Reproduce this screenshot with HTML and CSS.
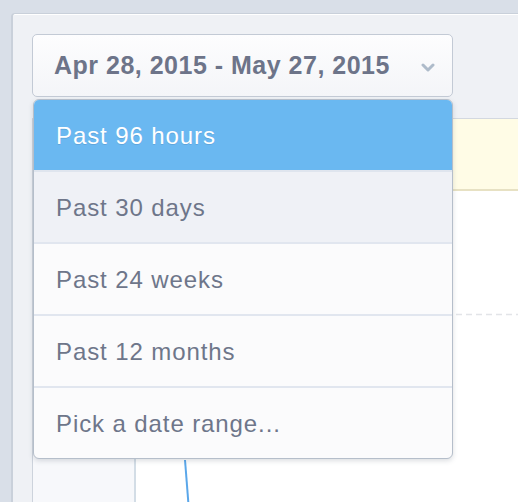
FILE: index.html
```html
<!DOCTYPE html>
<html>
<head>
<meta charset="utf-8">
<link rel="stylesheet" href="styles.css">
</head>
<body>
<div class="panel">
  <div class="picker-wrap">
    <button class="picker">
      <span class="picker-label">Apr 28, 2015 - May 27, 2015</span>
      <svg class="chevron" width="14" height="9" viewBox="0 0 14 9"><polyline points="2,2 7,7 12,2" fill="none" stroke="#aebbca" stroke-width="3" stroke-linejoin="round" stroke-linecap="round"/></svg>
    </button>
    <ul class="menu">
      <li class="item active">Past 96 hours</li>
      <li class="item hover">Past 30 days</li>
      <li class="item">Past 24 weeks</li>
      <li class="item">Past 12 months</li>
      <li class="item">Pick a date range...</li>
    </ul>
  </div>
  <div class="chart-box">
    <div class="notice"></div>
    <div class="chart-body">
      <div class="axis"></div>
      <div class="plot">
        <svg class="plot-svg" width="400" height="320" viewBox="0 0 400 320">
          <line x1="0" y1="123.5" x2="400" y2="123.5" stroke="#e2e4e8" stroke-width="1.5" stroke-dasharray="6 4"/>
          <line x1="49" y1="269" x2="53" y2="320" stroke="#5aa7ea" stroke-width="2"/>
        </svg>
      </div>
    </div>
  </div>
</div>
</body>
</html>
```
FILE: styles.css
```css
html, body {
  margin: 0;
  padding: 0;
  height: 100%;
  overflow: hidden;
}
body {
  background: #d9dfe8;
  font-family: "Liberation Sans", Arial, sans-serif;
}
.panel {
  margin: 13px 0 0 11px;
  height: 600px;
  background: #eff1f5;
  border-top: 1px solid #c9d0da;
  border-left: 2px solid #c9d0da;
  border-top-left-radius: 4px;
  box-shadow: inset 0 1px 0 #ffffff;
  padding: 20px 0 0 19px;
  box-sizing: border-box;
}
.picker-wrap {
  position: relative;
  width: 421px;
}
.picker {
  display: flex;
  align-items: center;
  justify-content: space-between;
  width: 421px;
  height: 63px;
  box-sizing: border-box;
  padding: 0 17px 0 21px;
  border: 1px solid #c3cad5;
  border-radius: 5px;
  background: linear-gradient(#fdfdfe, #f4f5f8);
  font-family: inherit;
  cursor: pointer;
}
.picker-label {
  font-size: 25px;
  font-weight: bold;
  color: #6d7489;
  letter-spacing: 0.5px;
}
.chevron {
  margin-top: 3px;
}
.menu {
  position: absolute;
  top: 65px;
  left: 1px;
  width: 420px;
  margin: 0;
  padding: 0;
  list-style: none;
  background: #fbfbfc;
  border: 1px solid #b5beca;
  border-radius: 6px;
  box-shadow: 0 2px 5px rgba(60, 70, 90, 0.18);
  overflow: hidden;
  box-sizing: border-box;
  z-index: 2;
}
.item {
  display: flex;
  align-items: center;
  height: 70px;
  padding: 1px 0 0 22px;
  box-sizing: border-box;
  height: 72px;
  font-size: 24px;
  letter-spacing: 0.9px;
  color: #6e768a;
  border-bottom: 2px solid #e1e6ef;
}
.item:last-child {
  border-bottom: none;
  height: 70px;
}
.item.active {
  background: #6ab8f1;
  color: #ffffff;
  text-shadow: 0 1px 0 rgba(60, 110, 160, 0.25);
  border-bottom-color: #dfe5ee;
}
.item.hover {
  background: #eff1f6;
}
.chart-box {
  margin-top: 21px;
  border-top: 1px solid #d3d8e0;
  border-left: 1px solid #cdd3dc;
  background: #ffffff;
}
.notice {
  height: 70px;
  background: #fffce6;
  border-bottom: 2px solid #e7e1c3;
}
.chart-body {
  display: flex;
  height: 400px;
}
.axis {
  flex: 0 0 101px;
  background: #f7f8fb;
  border-right: 2px solid #d3dde6;
}
.plot {
  flex: 1;
  min-width: 0;
  overflow: hidden;
  background: #ffffff;
}
.plot-svg {
  display: block;
}
```
